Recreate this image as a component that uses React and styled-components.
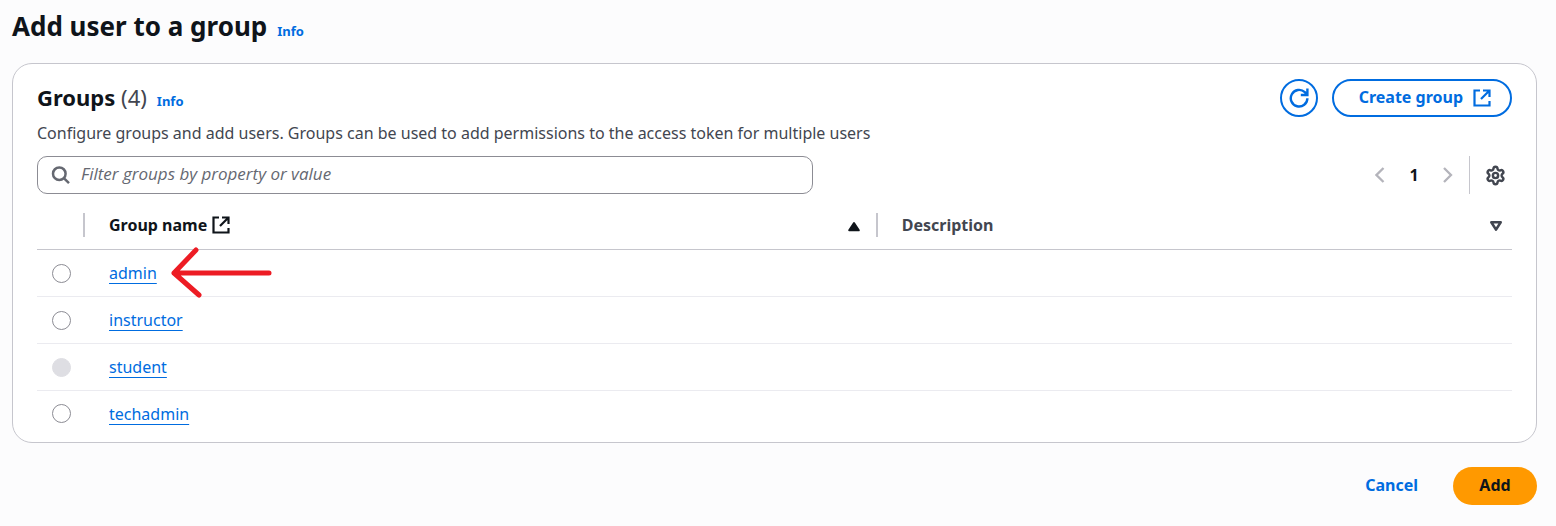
import React from "react";
import styled, { createGlobalStyle } from "styled-components";
import { Settings } from "lucide-react";

const GlobalStyle = createGlobalStyle`
  * { box-sizing: border-box; }
  body {
    margin: 0;
    background: #fcfcfd;
    color: #0f141a;
    font-family: "Noto Sans", "Open Sans", sans-serif;
    font-size: 16px;
    line-height: 24px;
  }
  button, input { font: inherit; }
`;

const Page = styled.main`
  padding: 8px 19px 20px 12px;
`;

const TitleRow = styled.div`
  display: flex;
  align-items: baseline;
  gap: 10px;
`;

const PageTitle = styled.h1`
  margin: 0;
  font-size: 26px;
  line-height: 36px;
  font-weight: 700;
`;

const InfoLink = styled.a`
  color: #006ce0;
  font-size: 13px;
  font-weight: 700;
  text-decoration: none;
`;

const Card = styled.section`
  margin-top: 19px;
  padding: 15px 24px 6px;
  background: #fff;
  border: 1px solid #c6c6cd;
  border-radius: 20px;
`;

const CardHeader = styled.header`
  display: flex;
  justify-content: space-between;
  align-items: flex-start;
`;

const CardTitle = styled.h2`
  margin: 0;
  font-size: 22px;
  line-height: 36px;
  font-weight: 700;
`;

const Counter = styled.span`
  color: #424650;
  font-weight: 400;
`;

const Actions = styled.div`
  display: flex;
  gap: 14px;
`;

const Button = styled.button`
  display: inline-flex;
  align-items: center;
  justify-content: center;
  height: 38px;
  min-width: 84px;
  padding: 0 24px 2px;
  border: 2px solid transparent;
  border-radius: 20px;
  background: ${(p) => (p.$primary ? "#ff9900" : "transparent")};
  background-origin: border-box;
  color: ${(p) => (p.$primary ? "#0f141a" : "#006ce0")};
  font-weight: 700;
  cursor: pointer;
`;

const OutlineButton = styled(Button)`
  gap: 10px;
  padding: 0 19px 0 25px;
  border-color: #006ce0;
  line-height: 22px;
`;

const RoundButton = styled(Button)`
  width: 38px;
  min-width: 0;
  padding: 0;
  border-color: #006ce0;
`;

const ButtonText = styled.span`
  padding-bottom: 2px;
`;

const Description = styled.p`
  margin: 4px 0 11px;
  color: #424650;
`;

const Tools = styled.div`
  display: grid;
  grid-template-columns: 10fr 9fr;
  align-items: center;
`;

const SearchBox = styled.label`
  display: flex;
  align-items: center;
  gap: 10px;
  height: 38px;
  padding: 0 13px;
  border: 1px solid #8c8c94;
  border-radius: 10px;
  background: #fff;
  color: #656871;
`;

const SearchInput = styled.input`
  flex: 1;
  min-width: 0;
  padding: 0 0 2px;
  border: 0;
  outline: 0;
  background: transparent;
  color: #0f141a;
  font-family: "Open Sans", "Noto Sans", sans-serif;
  font-size: 17px;
  &::placeholder {
    color: #656871;
    font-style: italic;
    opacity: 1;
  }
`;

const Pagination = styled.nav`
  display: flex;
  justify-content: flex-end;
  align-items: center;
`;

const PageButton = styled.button`
  display: inline-flex;
  align-items: center;
  justify-content: center;
  width: 34px;
  height: 32px;
  padding: 0;
  border: 0;
  background: transparent;
  color: ${(p) => p.$color};
  font-weight: 700;
`;

const ToolDivider = styled.span`
  width: 1px;
  height: 38px;
  margin: 0 8px 0 4px;
  background: #c6c6cd;
`;

const Table = styled.table`
  width: 100%;
  margin-top: 7px;
  border-collapse: separate;
  border-spacing: 0;
  table-layout: fixed;
`;

const HeadCell = styled.th`
  width: ${(p) => p.$width};
  height: 49px;
  padding: 0;
  border-bottom: 1px solid #c6c6cd;
  text-align: left;
`;

const HeadInner = styled.div`
  display: flex;
  align-items: center;
  justify-content: space-between;
  height: 24px;
  padding: 0 ${(p) => p.$right || 0}px 0 24px;
  border-right: ${(p) => (p.$divided ? "2px solid #c6c6cd" : "0")};
  color: ${(p) => p.$color};
`;

const HeadLabel = styled.span`
  display: inline-flex;
  align-items: center;
  gap: 5px;
`;

const SortButton = styled.button`
  display: inline-flex;
  padding: 2px 0 0;
  border: 0;
  background: transparent;
  color: inherit;
`;

const Cell = styled.td`
  height: ${(p) => (p.$last ? 45 : 47)}px;
  padding: 0 0 0 ${(p) => p.$left}px;
  border-bottom: ${(p) => (p.$last ? "0" : "1px solid #ebebf0")};
`;

const Radio = styled.input`
  appearance: none;
  display: block;
  width: 19px;
  height: 19px;
  margin: 0;
  border: 1px solid #8c8c94;
  border-radius: 50%;
  background: #fff;
  &:disabled {
    border-color: #dedee3;
    background: #dedee3;
  }
`;

const LinkHolder = styled.span`
  position: relative;
  display: inline-block;
`;

const GroupLink = styled.a`
  color: #006ce0;
  text-decoration: underline;
  text-decoration-thickness: 1px;
  text-underline-offset: 4px;
  text-decoration-skip-ink: none;
`;

const Arrow = styled.svg`
  position: absolute;
  left: 100%;
  top: 50%;
  margin: -27px 0 0 12px;
  pointer-events: none;
`;

const Footer = styled.footer`
  display: flex;
  justify-content: flex-end;
  gap: 9px;
  margin-top: 24px;
`;

const ExternalIcon = () => (
  <svg width="18" height="18" viewBox="0 0 18 18" fill="none" stroke="currentColor" strokeWidth="2.2" aria-hidden="true">
    <path d="M7 1.5H1.5v15h15V12M10 1.5h6.5V8M16 2L8 10" />
  </svg>
);

const RefreshIcon = () => (
  <svg width="20" height="20" viewBox="0 0 20 20" fill="none" stroke="currentColor" strokeWidth="2.4" aria-hidden="true">
    <path d="M18.4 10.2A8.3 8.3 0 1 1 15.8 4.2L18 6.4M18.4 0.6v6.4h-6.6" />
  </svg>
);

const SearchIcon = () => (
  <svg width="20" height="20" viewBox="0 0 20 20" fill="none" stroke="currentColor" strokeWidth="2.5" aria-hidden="true">
    <circle cx="8.3" cy="8.7" r="6.3" />
    <path d="M12.8 13.2L18 18.2" />
  </svg>
);

const Chevron = ({ right }) => (
  <svg width="10" height="16" viewBox="0 0 10 16" fill="none" stroke="currentColor" strokeWidth="2.3" aria-hidden="true">
    <path d={right ? "M1 1l7 7L1 15" : "M8.5 1l-7 7 7 7"} />
  </svg>
);

const Triangle = ({ filled }) => (
  <svg width="14" height="12" viewBox="0 0 14 12" stroke="currentColor" strokeWidth="2" strokeLinejoin="round" aria-hidden="true">
    {filled ? (
      <path d="M7 3l4.8 7.3H2.2z" fill="currentColor" />
    ) : (
      <path d="M2.3 2.3h9.4L7 9.6z" fill="none" strokeWidth="2.6" />
    )}
  </svg>
);

const groups = [
  { name: "admin", marked: true },
  { name: "instructor" },
  { name: "student", disabled: true },
  { name: "techadmin" },
];

export default function App() {
  return (
    <>
      <GlobalStyle />
      <Page>
        <TitleRow>
          <PageTitle>Add user to a group</PageTitle>
          <InfoLink href="#info">Info</InfoLink>
        </TitleRow>
        <Card>
          <CardHeader>
            <TitleRow>
              <CardTitle>
                Groups <Counter>(4)</Counter>
              </CardTitle>
              <InfoLink href="#groups-info">Info</InfoLink>
            </TitleRow>
            <Actions>
              <RoundButton type="button" aria-label="Refresh">
                <RefreshIcon />
              </RoundButton>
              <OutlineButton type="button">
                <ButtonText>Create group</ButtonText>
                <ExternalIcon />
              </OutlineButton>
            </Actions>
          </CardHeader>
          <Description>
            Configure groups and add users. Groups can be used to add permissions to the access token for multiple users
          </Description>
          <Tools>
            <SearchBox>
              <SearchIcon />
              <SearchInput type="text" aria-label="Filter groups" placeholder="Filter groups by property or value" />
            </SearchBox>
            <Pagination aria-label="Pages">
              <PageButton type="button" $color="#b4b4bb" aria-label="Previous page">
                <Chevron />
              </PageButton>
              <PageButton type="button" $color="#0f141a">1</PageButton>
              <PageButton type="button" $color="#b4b4bb" aria-label="Next page">
                <Chevron right />
              </PageButton>
              <ToolDivider />
              <PageButton type="button" $color="#424650" aria-label="Preferences">
                <Settings size={21} strokeWidth={2.8} />
              </PageButton>
            </Pagination>
          </Tools>
          <Table>
            <thead>
              <tr>
                <HeadCell $width="48px" aria-label="Selection">
                  <HeadInner $divided />
                </HeadCell>
                <HeadCell $width="auto" scope="col">
                  <HeadInner $divided $right={15} $color="#0f141a">
                    <HeadLabel>
                      Group name <ExternalIcon />
                    </HeadLabel>
                    <SortButton type="button" aria-label="Sort by group name">
                      <Triangle filled />
                    </SortButton>
                  </HeadInner>
                </HeadCell>
                <HeadCell $width="43%" scope="col">
                  <HeadInner $right={9} $color="#424650">
                    <HeadLabel>Description</HeadLabel>
                    <SortButton type="button" aria-label="Sort by description">
                      <Triangle />
                    </SortButton>
                  </HeadInner>
                </HeadCell>
              </tr>
            </thead>
            <tbody>
              {groups.map((group, i) => {
                const last = i === groups.length - 1;
                return (
                  <tr key={group.name}>
                    <Cell $left={15} $last={last}>
                      <Radio type="radio" name="group" aria-label={group.name} disabled={group.disabled} />
                    </Cell>
                    <Cell $left={24} $last={last}>
                      <LinkHolder>
                        <GroupLink href={`#${group.name}`}>{group.name}</GroupLink>
                        {group.marked && (
                          <Arrow
                            width="104"
                            height="54"
                            viewBox="0 0 104 54"
                            fill="none"
                            stroke="#ed1c24"
                            strokeWidth="5"
                            strokeLinecap="round"
                            strokeLinejoin="round"
                            aria-hidden="true"
                          >
                            <path d="M100 27H5M27 4L5 27L30 49" />
                          </Arrow>
                        )}
                      </LinkHolder>
                    </Cell>
                    <Cell $left={24} $last={last} />
                  </tr>
                );
              })}
            </tbody>
          </Table>
        </Card>
        <Footer>
          <Button type="button">Cancel</Button>
          <Button type="button" $primary>Add</Button>
        </Footer>
      </Page>
    </>
  );
}
